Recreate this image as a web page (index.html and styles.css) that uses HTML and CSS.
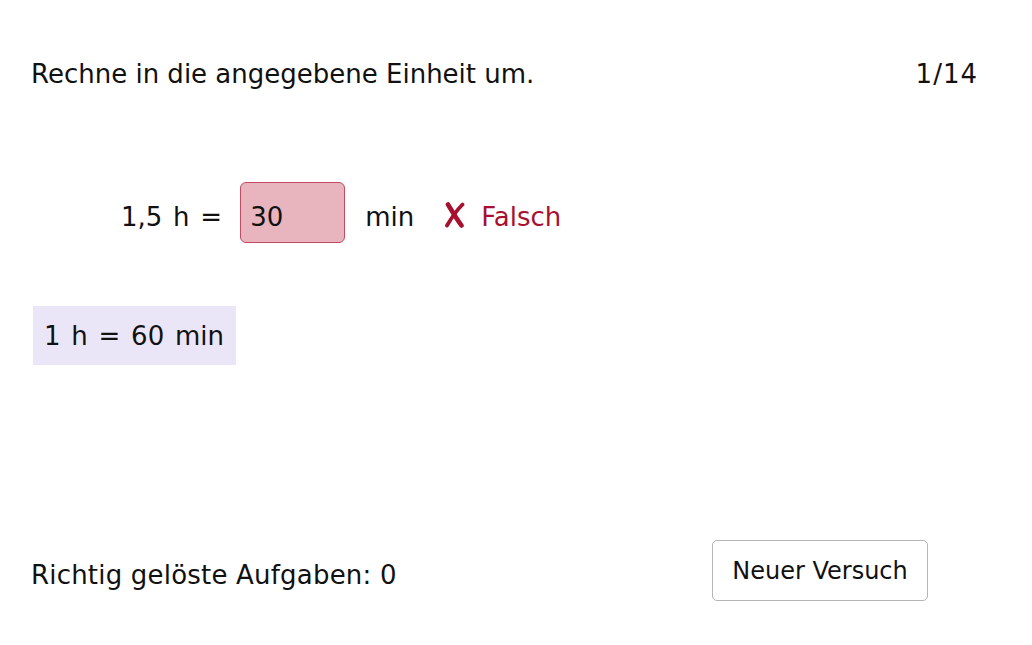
FILE: index.html
```html
<!DOCTYPE html>
<html>
<head>
<meta charset="utf-8">
<link rel="stylesheet" href="styles.css">
</head>
<body>
<div class="page">
  <div class="header">
    <div class="task">Rechne in die angegebene Einheit um.</div>
    <div class="counter">1/14</div>
  </div>
  <div class="exercise">
    <span class="lhs">1,5 h =</span>
    <div class="input">30</div>
    <span class="unit">min</span>
    <span class="feedback"><svg class="cross" width="22" height="26" viewBox="0 0 22 26" aria-hidden="true"><path d="M4 2.5 C8 9 12 16 17.5 23.5" fill="none" stroke="#a8102f" stroke-width="4.6" stroke-linecap="round"/><path d="M18.5 2.5 C13 8 8 15 3 23.5" fill="none" stroke="#a8102f" stroke-width="3.8" stroke-linecap="round"/></svg><span class="fb-text">Falsch</span></span>
  </div>
  <div class="hint">1 h = 60 min</div>
  <div class="footer">
    <div class="score">Richtig gelöste Aufgaben: 0</div>
    <button class="retry">Neuer Versuch</button>
  </div>
</div>
</body>
</html>
```
FILE: styles.css
```css
html, body {
  margin: 0;
  padding: 0;
  background: #ffffff;
}
body {
  font-family: "DejaVu Sans", sans-serif;
  color: #111111;
}
.page {
  width: 1032px;
  height: 645px;
  box-sizing: border-box;
  padding: 59px 54px 0 31px;
  display: flex;
  flex-direction: column;
}
.header {
  display: flex;
  justify-content: space-between;
  align-items: baseline;
  font-size: 26px;
  height: 37px;
}
.counter {
  letter-spacing: 1px;
}
.exercise {
  display: flex;
  align-items: center;
  margin-top: 86px;
  padding-left: 90px;
  font-size: 26px;
  height: 61px;
}
.lhs, .unit, .feedback {
  padding-top: 8px;
}
.lhs {
  word-spacing: 2.5px;
}
.input {
  width: 105px;
  height: 61px;
  margin-left: 18px;
  background: #e8b4bd;
  border: 1px solid #c44a62;
  border-radius: 6px;
  box-sizing: border-box;
  padding: 8px 0 0 9px;
  display: flex;
  align-items: center;
}
.unit {
  margin-left: 20px;
}
.feedback {
  margin-left: 30px;
  color: #a8102f;
  display: flex;
  align-items: center;
}
.cross {
  display: block;
  margin-right: 15px;
  margin-top: -4px;
}
.hint {
  align-self: flex-start;
  margin-top: 63px;
  margin-left: 2px;
  background: #ebe6f7;
  font-size: 26px;
  word-spacing: 2.5px;
  height: 59px;
  box-sizing: border-box;
  padding: 0 12px 0 11px;
  display: flex;
  align-items: center;
}
.footer {
  margin-top: 175px;
  margin-right: 50px;
  display: flex;
  justify-content: space-between;
  align-items: center;
  height: 61px;
  font-size: 26px;
}
.score {
  padding-top: 9px;
  letter-spacing: 0.2px;
}
.retry {
  font-family: "DejaVu Sans", sans-serif;
  font-size: 24px;
  color: #111111;
  background: #ffffff;
  border: 1px solid #b5b5b5;
  border-radius: 5px;
  height: 61px;
  width: 216px;
  padding: 0;
}
```
